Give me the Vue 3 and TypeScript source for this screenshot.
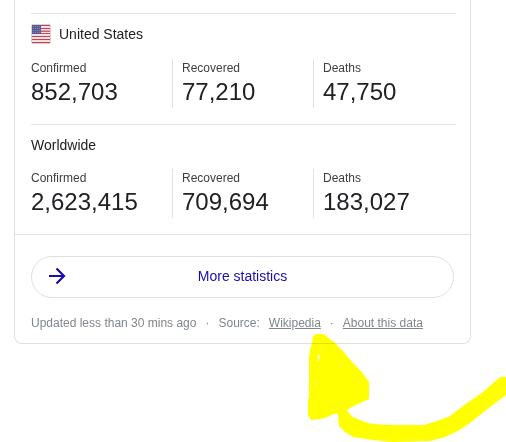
<script setup lang="ts">
interface Stat {
  label: string
  value: string
}

interface Region {
  name: string
  flag: boolean
  stats: Stat[]
}

const regions: Region[] = [
  {
    name: 'United States',
    flag: true,
    stats: [
      { label: 'Confirmed', value: '852,703' },
      { label: 'Recovered', value: '77,210' },
      { label: 'Deaths', value: '47,750' },
    ],
  },
  {
    name: 'Worldwide',
    flag: false,
    stats: [
      { label: 'Confirmed', value: '2,623,415' },
      { label: 'Recovered', value: '709,694' },
      { label: 'Deaths', value: '183,027' },
    ],
  },
]
</script>

<template>
  <main class="page">
    <article class="card">
      <div class="regions">
        <section v-for="region in regions" :key="region.name" class="region">
          <h2 class="title">
            <svg v-if="region.flag" class="flag" viewBox="0 0 20 21" aria-hidden="true">
              <rect x="0.5" y="0.5" width="19" height="19" rx="1.5" fill="#f1dfe1" stroke="#dccdcd" />
              <g fill="#c04357">
                <rect x="1" y="1" width="18" height="1" />
                <rect x="1" y="4" width="18" height="1" />
                <rect x="1" y="6" width="18" height="1" opacity="0.4" />
                <rect x="1" y="7" width="18" height="1" opacity="0.8" />
                <rect x="1" y="9" width="18" height="1" opacity="0.9" />
                <rect x="1" y="12" width="18" height="1" />
                <rect x="1" y="15" width="18" height="1" />
                <rect x="1" y="18" width="18" height="1" />
              </g>
              <rect x="1" y="1" width="9" height="9" fill="#5b5c92" />
              <g fill="#7d7fae">
                <rect v-for="n in 16" :key="n" :x="2 + ((n - 1) % 4) * 2" :y="2 + Math.floor((n - 1) / 4) * 2" width="1" height="1" />
              </g>
            </svg>
            {{ region.name }}
          </h2>
          <dl class="stats">
            <div v-for="stat in region.stats" :key="stat.label" class="stat">
              <dt>{{ stat.label }}</dt>
              <dd>{{ stat.value }}</dd>
            </div>
          </dl>
        </section>
      </div>
      <footer class="footer">
        <a class="more" href="#statistics">
          <svg class="arrow" viewBox="0 0 18 18" aria-hidden="true">
            <path d="M1 9H16M8.5 1.5L16 9L8.5 16.5" fill="none" stroke="#1a0dab" stroke-width="2.2" />
          </svg>
          More statistics
        </a>
        <p class="source">
          <span>Updated less than 30 mins ago</span>
          <span>·</span>
          <span>Source:</span>
          <a href="#wikipedia">Wikipedia</a>
          <span>·</span>
          <a href="#about">About this data</a>
        </p>
      </footer>
    </article>
    <svg class="marker" viewBox="306 332 200 110" aria-hidden="true">
      <path
        fill="#ffff00"
        fill-rule="evenodd"
        d="M315 334H323L326 336L335 343L342 350L353 363L361 371L369 382V399L358 404L348 409L347 411L353 417L362 421L372 424L392 425H424L437 421L450 416L463 406L483 392L500 377H506V395L490 407L470 423L458 431L445 437L430 441L392 442L373 440L353 437L345 432L339 426L338 414H334L325 418L321 419L311 420L308 415V399L309 398V357L310 350L312 343L313 337ZM319 354L317 361L319 360L320 354ZM315 383V385L318 383Z"
      />
    </svg>
  </main>
</template>

<style>
body {
  margin: 0;
  background: #fff;
}
</style>

<style scoped>
.page {
  position: relative;
  isolation: isolate;
  box-sizing: border-box;
  min-height: 100vh;
  padding: 0 35px 0 14px;
  background: #fff;
  font-family: "Liberation Sans", Arial, sans-serif;
  color: #202124;
}

.card {
  border: 1px solid #dfe1e5;
  border-top: 0;
  border-radius: 0 0 8px 8px;
}

.regions {
  padding: 13px 14px 0 16px;
  border-bottom: 1px solid #dfe1e5;
}

.region {
  padding: 10px 2px 16px 0;
  border-top: 1px solid #dfe1e5;
}

.title {
  display: flex;
  align-items: flex-start;
  gap: 8px;
  margin: 0 0 14px;
  font-size: 14px;
  font-weight: 400;
  line-height: 20px;
}

.flag {
  width: 20px;
  height: 21px;
}

.stats {
  display: grid;
  grid-template-columns: repeat(3, 1fr);
  margin: 0;
}

.stat {
  height: 49px;
}

.stat + .stat {
  padding-left: 9px;
  border-left: 1px solid #dfe1e5;
}

dt {
  font-size: 12px;
  line-height: 18px;
  color: #3c4043;
}

dd {
  margin: 0;
  font-size: 24px;
  line-height: 30px;
}

.footer {
  padding: 21px 16px 10px;
}

.more {
  position: relative;
  display: flex;
  align-items: center;
  justify-content: center;
  box-sizing: border-box;
  height: 42px;
  padding-bottom: 2px;
  border: 1px solid #dfe1e5;
  border-radius: 21px;
  font-size: 14px;
  color: #1a0dab;
  text-decoration: none;
}

.arrow {
  position: absolute;
  left: 16px;
  width: 18px;
  height: 18px;
}

.source {
  display: flex;
  gap: 9px;
  margin: 15px 0 0;
  font-size: 12px;
  line-height: 20px;
  color: #80868b;
  white-space: nowrap;
}

.source a {
  color: inherit;
  text-decoration: underline;
}

.marker {
  position: absolute;
  top: 332px;
  left: 306px;
  width: 200px;
  height: 110px;
  mix-blend-mode: multiply;
  pointer-events: none;
}
</style>
